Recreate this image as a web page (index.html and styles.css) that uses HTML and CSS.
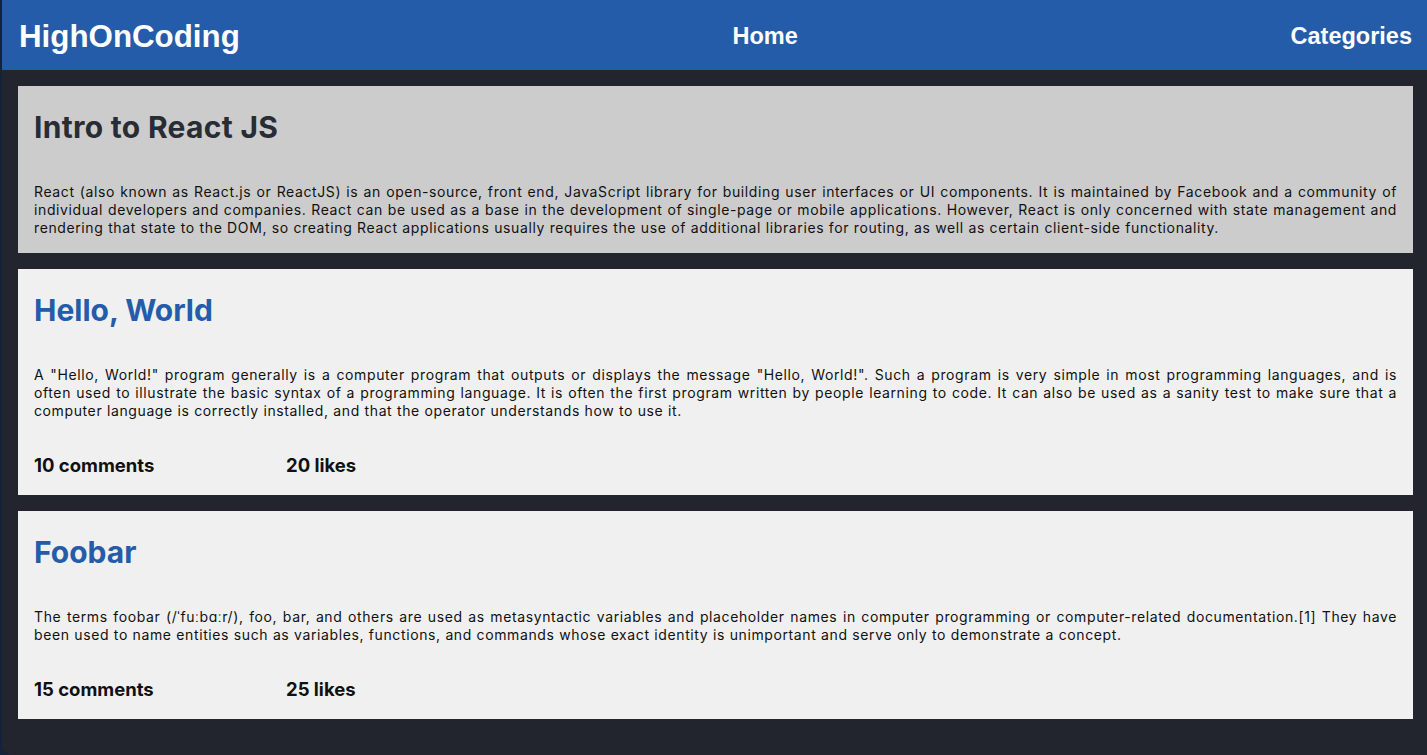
FILE: index.html
```html
<!DOCTYPE html>
<html lang="en">
<head>
<meta charset="utf-8">
<title>HighOnCoding</title>
<link rel="stylesheet" href="styles.css">
</head>
<body>
<div class="app">
  <header class="topbar">
    <a class="brand" href="#">HighOnCoding</a>
    <a class="nav-link" href="#">Home</a>
    <a class="nav-link" href="#">Categories</a>
  </header>
  <main class="content">
    <section class="card card-intro">
      <h1 class="card-title">Intro to React JS</h1>
      <p class="card-text">React (also known as React.js or ReactJS) is an open-source, front end, JavaScript library for building user interfaces or UI components. It is maintained by Facebook and a community of individual developers and companies. React can be used as a base in the development of single-page or mobile applications. However, React is only concerned with state management and rendering that state to the DOM, so creating React applications usually requires the use of additional libraries for routing, as well as certain client-side functionality.</p>
    </section>
    <section class="card">
      <h1 class="card-title title-blue">Hello, World</h1>
      <p class="card-text">A "Hello, World!" program generally is a computer program that outputs or displays the message "Hello, World!". Such a program is very simple in most programming languages, and is often used to illustrate the basic syntax of a programming language. It is often the first program written by people learning to code. It can also be used as a sanity test to make sure that a computer language is correctly installed, and that the operator understands how to use it.</p>
      <div class="stats">
        <span class="stat">10 comments</span>
        <span class="stat">20 likes</span>
      </div>
    </section>
    <section class="card">
      <h1 class="card-title title-blue">Foobar</h1>
      <p class="card-text">The terms foobar (/ˈfuːbɑːr/), foo, bar, and others are used as metasyntactic variables and placeholder names in computer programming or computer-related documentation.[1] They have been used to name entities such as variables, functions, and commands whose exact identity is unimportant and serve only to demonstrate a concept.</p>
      <div class="stats">
        <span class="stat">15 comments</span>
        <span class="stat">25 likes</span>
      </div>
    </section>
  </main>
</div>
</body>
</html>
```

FILE: styles.css
```css
html, body {
  margin: 0;
  padding: 0;
  background: #15233a;
}

body {
  font-family: "Inter", "Noto Sans", sans-serif;
}

.app {
  margin-left: 2px;
  min-height: 755px;
  background: #22252e;
  border-bottom-left-radius: 10px;
  box-sizing: border-box;
}

.topbar {
  height: 70px;
  background: #245ca9;
  display: flex;
  align-items: center;
  justify-content: space-between;
  padding: 3px 15px 0 17px;
  box-sizing: border-box;
}

.brand,
.nav-link {
  font-family: "Liberation Sans", Arial, sans-serif;
  font-weight: bold;
  color: #ffffff;
  text-decoration: none;
}

.brand {
  font-size: 31.3px;
}

.nav-link {
  font-size: 23.5px;
}

.content {
  display: flex;
  flex-direction: column;
  gap: 16px;
  padding: 16px 14px 35px 16px;
}

.card {
  background: #f0f0f0;
  padding: 0 16px;
  display: flow-root;
}

.card-intro {
  background: #cccccc;
}

.card-title {
  font-size: 30px;
  font-weight: 700;
  color: #282c34;
  margin: 22px 0 36px;
  line-height: 39px;
}

.card-intro .card-title {
  letter-spacing: 0.3px;
}

.title-blue {
  color: #245ca9;
}

.card-text {
  font-size: 14px;
  line-height: 18px;
  color: #111111;
  text-align: justify;
  margin: 0 0 16px;
  letter-spacing: 0.61px;
  word-spacing: 0.15px;
}

.stats {
  display: grid;
  grid-template-columns: 252px auto;
  justify-content: start;
  font-size: 18.5px;
  font-weight: 700;
  color: #111111;
  margin: 34px 0 19px;
  line-height: 22px;
}
```
